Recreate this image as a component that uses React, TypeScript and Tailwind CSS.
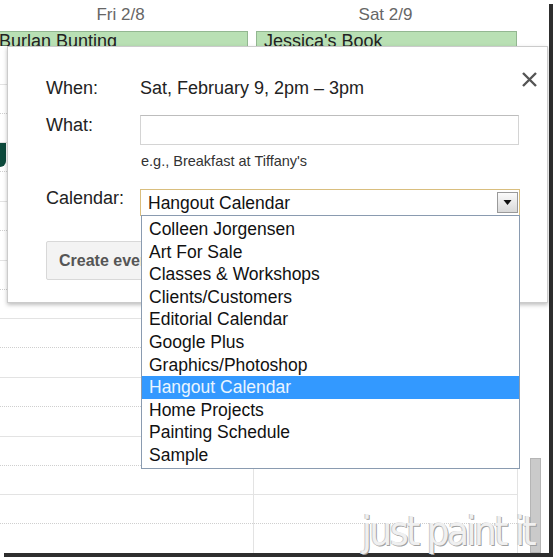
import React from 'react';

const calendars = [
  'Colleen Jorgensen',
  'Art For Sale',
  'Classes & Workshops',
  'Clients/Customers',
  'Editorial Calendar',
  'Google Plus',
  'Graphics/Photoshop',
  'Hangout Calendar',
  'Home Projects',
  'Painting Schedule',
  'Sample',
];

const HourRow: React.FC<{ mark?: boolean }> = ({ mark }) => (
  <div className="flex h-[59px] border-t border-[#e3e3e3]">
    <div className="relative w-[253px] flex flex-col">
      <div className="h-[29px] border-b border-dotted border-[#cfcfcf]">
        {mark && <div className="w-[6px] h-[24px] bg-[#0d4a3c] rounded-br-[6px]" />}
      </div>
    </div>
    <div className="w-[265px] border-l border-r border-[#e3e3e3] flex flex-col">
      <div className="h-[29px] border-b border-dotted border-[#cfcfcf]" />
    </div>
  </div>
);

export default function App() {
  return (
    <div className="relative w-[553px] h-[557px] overflow-hidden bg-white font-['Liberation_Sans',Arial,sans-serif]">
      {/* calendar behind the popup */}
      <div className="w-[549px] h-[553px] bg-white shadow-[4px_4px_0_#2e2e2e] flex">
        <div className="flex flex-col w-[518px]">
          <div className="flex h-[31px] text-[17px] text-[#666]">
            <div className="w-[253px] pr-[12px] pt-[2px] text-center">Fri 2/8</div>
            <div className="w-[265px] pt-[2px] text-center">Sat 2/9</div>
          </div>
          <div className="flex h-[15px] overflow-hidden">
            <div className="w-[253px] pr-[5px]">
              <div className="-ml-[4px] h-[22px] bg-[#b9e0b4] border border-[#93b791] pl-[2px] text-[18px] leading-[18px] text-[#222]">
                Burlan Bunting
              </div>
            </div>
            <div className="w-[265px] pl-[3px] pr-[1px]">
              <div className="h-[22px] bg-[#b9e0b4] border border-[#93b791] pl-[7px] text-[18px] leading-[18px] text-[#222]">
                Jessica's Book
              </div>
            </div>
          </div>
          <div className="h-[38px]" />
          <HourRow />
          <HourRow mark />
          <HourRow />
          <HourRow />
          <HourRow />
          <HourRow />
          <HourRow />
          <HourRow />
        </div>
        <div className="flex-1 flex flex-col items-center pt-[458px] pl-[4px]">
          <div className="w-[11px] flex-1 bg-[#cacaca] border border-[#b5b5b5]" />
        </div>
      </div>

      {/* watermark */}
      <div className="absolute right-[19px] bottom-[4px] font-['DejaVu_Sans_Condensed','DejaVu_Sans',sans-serif] font-thin text-[40px] leading-[44px] tracking-[-2.5px] text-[#f0f0f0] [text-shadow:1px_1px_0_#a0a0a0,-1px_0_0_#c8c8c8]">
        just paint it
      </div>

      {/* quick add popup */}
      <div className="absolute left-[7px] top-[46px] w-[541px] h-[257px] bg-white border border-[#cbcbcb] shadow-[0_2px_4px_rgba(0,0,0,0.25)] pl-[38px] pt-[30px] text-[#222]">
        <button className="absolute right-[9px] top-[24px] w-[17px] h-[17px] text-[#555]">
          <svg viewBox="0 0 17 17" className="w-[17px] h-[17px]">
            <path d="M2 2 L15 15 M15 2 L2 15" stroke="currentColor" strokeWidth="2.4" />
          </svg>
        </button>

        <div className="flex items-center h-[22px] text-[18px]">
          <div className="w-[94px]">When:</div>
          <div>Sat, February 9, 2pm – 3pm</div>
        </div>

        <div className="flex mt-[16px]">
          <div className="w-[94px] text-[18px] leading-[22px] -mt-[1px]">What:</div>
          <div className="w-[379px] h-[30px] border border-[#d4d4d4] border-t-[#bdbdbd] bg-white" />
        </div>

        <div className="pl-[95px] mt-[7px] text-[14.5px] leading-[18px] text-[#333]">
          e.g., Breakfast at Tiffany's
        </div>

        <div className="flex mt-[19px]">
          <div className="w-[94px] text-[18px] leading-[22px] -mt-[2px]">Calendar:</div>
          <div className="relative w-[380px] h-[27px] border border-[#d9be7e] bg-white">
            <div className="pl-[7px] pt-[1px] text-[17.5px] leading-[25px] text-[#111]">Hangout Calendar</div>
            <div className="absolute right-[1px] top-[2px] w-[21px] h-[21px] border border-[#9a9a9a] bg-gradient-to-b from-[#fbfbfb] to-[#d9d9d9] flex items-center justify-center">
              <svg viewBox="0 0 8 5" className="w-[9px] h-[5px]">
                <path d="M0 0 H8 L4 5 Z" fill="#111" />
              </svg>
            </div>

            <div className="absolute left-0 top-full z-10 w-[379px] border border-[#8a9bb0] bg-white pt-[2px] pb-[1px]">
              {calendars.map((c, i) => (
                <div
                  key={c}
                  className={
                    i === 7
                      ? 'h-[22.6px] pl-[7px] text-[17.5px] leading-[22.6px] bg-[#3399ff] text-[#eaf5ff]'
                      : 'h-[22.6px] pl-[7px] text-[17.5px] leading-[22.6px] text-[#111]'
                  }
                >
                  {c}
                </div>
              ))}
            </div>
          </div>
        </div>

        <div className="mt-[25px]">
          <button className="h-[39px] px-[12px] rounded-[2px] border border-[#d8d8d8] bg-[#f3f3f3] text-[16px] font-bold text-[#555]">
            Create event
          </button>
        </div>
      </div>
    </div>
  );
}
